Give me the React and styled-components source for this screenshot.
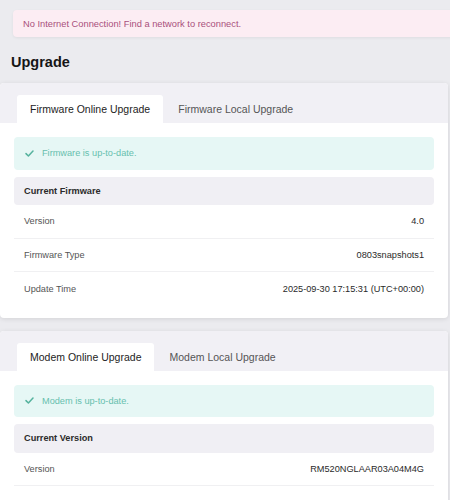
import React from 'react';
import styled, { createGlobalStyle } from 'styled-components';

const GlobalStyle = createGlobalStyle`
    body {
        margin: 0;
        background-color: #ebebef;
        font-family: "Liberation Sans", Arial, sans-serif;
        overflow: hidden;
    }
`;

const Page = styled.div`
    display: flex;
    flex-direction: column;
    padding-top: 10px;
`;
const OfflineAlert = styled.div`
    margin: 0 -20px 0 13px;
    height: 27px;
    display: flex;
    align-items: center;
    padding-left: 10px;
    background-color: #fcedf3;
    color: #a9507c;
    font-size: 9.3px;
    border-radius: 4px;
    box-shadow: 0 1px 3px rgba(0, 0, 0, 0.06);
`;
const Title = styled.h1`
    margin: 15px 0 11px 11px;
    font-size: 14.5px;
    line-height: 20px;
    font-weight: 700;
    color: #151515;
`;
const Card = styled.div`
    margin: 0 2px 13px 0;
    background-color: #fff;
    border-radius: 4px;
    box-shadow: 0 1px 5px rgba(0, 0, 0, 0.1);
    overflow: hidden;
`;
const TabBar = styled.div`
    display: flex;
    gap: 2px;
    padding: 12px 17px 0;
    background-color: #f1f0f5;
`;
const Tab = styled.div`
    height: 28px;
    display: flex;
    align-items: center;
    padding: 0 13px;
    font-size: 10.5px;
    color: ${(p) => (p.active ? '#1d1d1d' : '#555')};
    background-color: ${(p) => (p.active ? '#fff' : 'transparent')};
    border-radius: 3px 3px 0 0;
`;
const Body = styled.div`
    display: flex;
    flex-direction: column;
    padding: 14px 14px ${(p) => p.bottom}px;
`;
const SuccessAlert = styled.div`
    height: 32.5px;
    display: flex;
    align-items: center;
    gap: 8px;
    padding-left: 11px;
    background-color: #e6f7f5;
    color: #67bfae;
    font-size: 9.2px;
    border-radius: 4px;
`;
const SectionHeader = styled.div`
    margin-top: 7px;
    height: 28.5px;
    display: flex;
    align-items: center;
    padding-left: 10px;
    background-color: #f0eff4;
    border-radius: 4px;
    font-size: 9.2px;
    font-weight: 700;
    color: #2b2b2b;
`;
const Row = styled.div`
    height: 33.5px;
    display: flex;
    align-items: center;
    justify-content: space-between;
    padding: 0 10px;
    font-size: 9.2px;
    border-bottom: ${(p) => (p.last ? 'none' : '1px solid #f0f0f2')};
    box-sizing: border-box;
`;
const Label = styled.span`
    color: #555;
`;
const Value = styled.span`
    color: #2a2a2a;
`;

const Check = () => (
    <svg width="9" height="7" viewBox="0 0 9 7" fill="none">
        <polyline points="1,3.6 3.4,6 8,1" stroke="#56b39e" strokeWidth="1.5" strokeLinecap="round" strokeLinejoin="round" />
    </svg>
);

const UpgradeCard = ({ tabs, message, section, rows, lastNoBorder, bottom }) => (
    <Card>
        <TabBar>
            {tabs.map((t, i) => (
                <Tab key={t} active={i === 0}>{t}</Tab>
            ))}
        </TabBar>
        <Body bottom={bottom}>
            <SuccessAlert>
                <Check />
                {message}
            </SuccessAlert>
            <SectionHeader>{section}</SectionHeader>
            {rows.map(([k, v], i) => (
                <Row key={k} last={lastNoBorder && i === rows.length - 1}>
                    <Label>{k}</Label>
                    <Value>{v}</Value>
                </Row>
            ))}
        </Body>
    </Card>
);

const App = () => {
    return (
        <Page>
            <GlobalStyle />
            <OfflineAlert>No Internet Connection! Find a network to reconnect.</OfflineAlert>
            <Title>Upgrade</Title>
            <UpgradeCard
                tabs={['Firmware Online Upgrade', 'Firmware Local Upgrade']}
                message="Firmware is up-to-date."
                section="Current Firmware"
                rows={[
                    ['Version', '4.0'],
                    ['Firmware Type', '0803snapshots1'],
                    ['Update Time', '2025-09-30 17:15:31 (UTC+00:00)'],
                ]}
                lastNoBorder
                bottom={12}
            />
            <UpgradeCard
                tabs={['Modem Online Upgrade', 'Modem Local Upgrade']}
                message="Modem is up-to-date."
                section="Current Version"
                rows={[['Version', 'RM520NGLAAR03A04M4G']]}
                bottom={30}
            />
        </Page>
    );
};

export default App;
